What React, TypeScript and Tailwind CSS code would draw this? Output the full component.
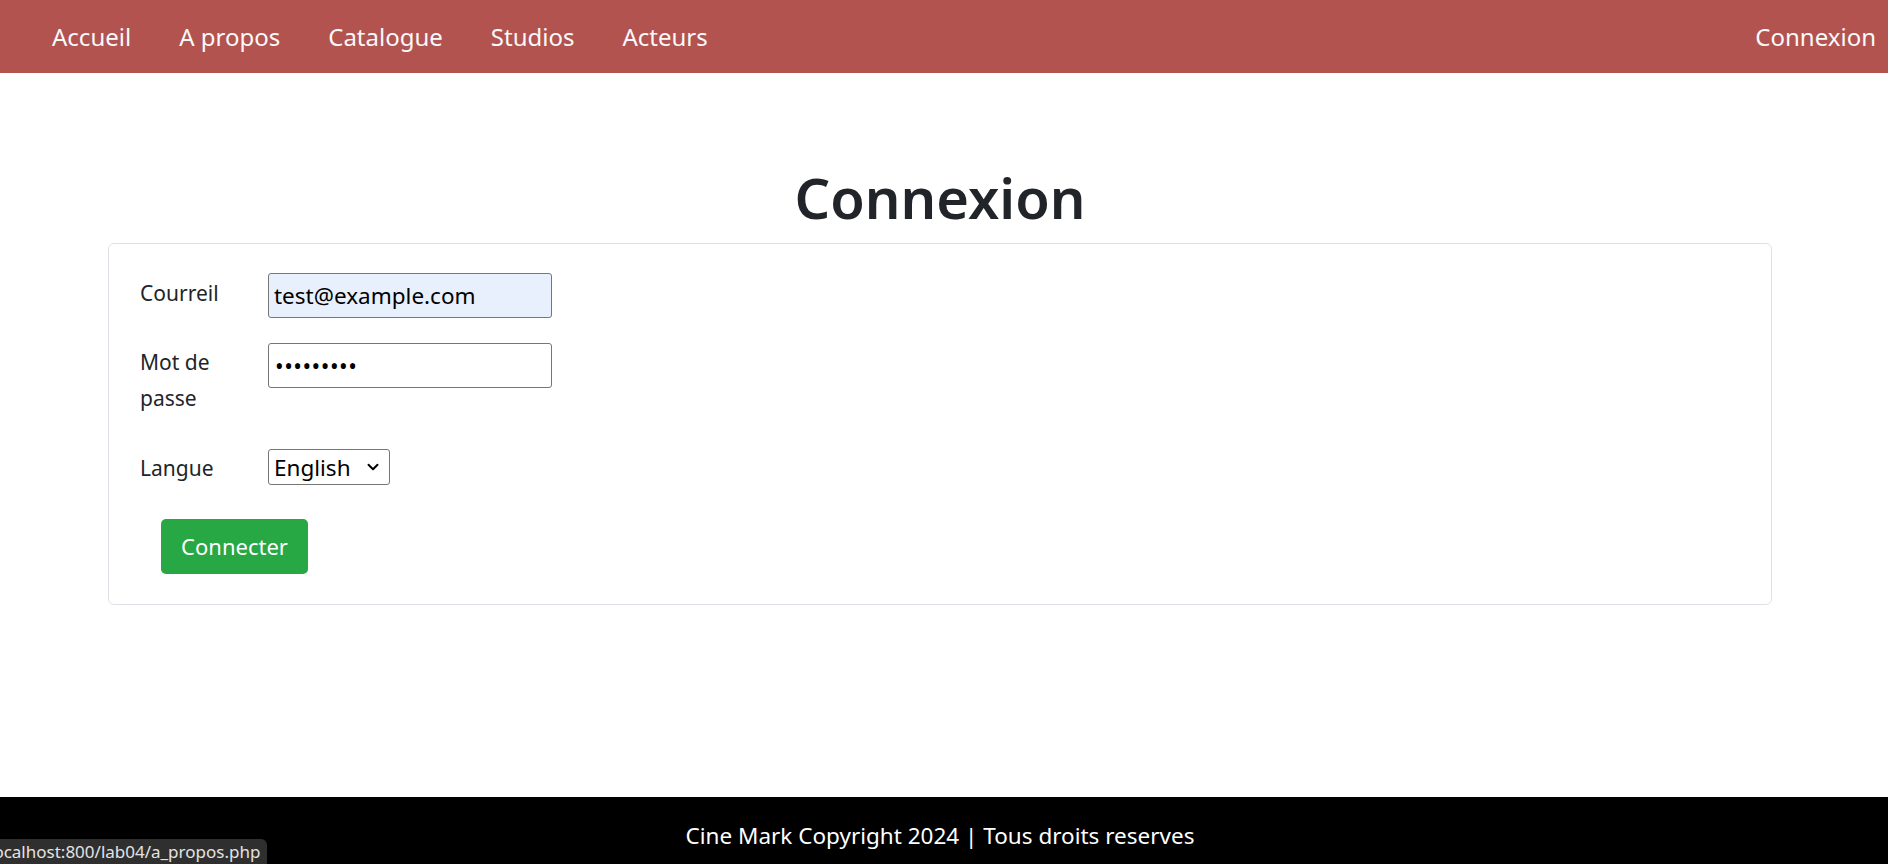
import { ChevronDown } from "lucide-react";

const navLinks = ["Accueil", "A propos", "Catalogue", "Studios", "Acteurs"];

const font = { fontFamily: '"Noto Sans", "Open Sans", sans-serif' };

export default function App() {
  return (
    <div className="relative h-screen overflow-hidden flex flex-col bg-white text-[#212529]" style={font}>
      {/* barre de navigation */}
      <nav className="h-[73px] shrink-0 bg-[#b3534f] flex items-center pl-[52px] pr-[12px] text-[24px] text-[#f8f9fa]">
        <ul className="flex items-center gap-[48px]">
          {navLinks.map((link) => (
            <li key={link}>
              <a href="#" className="leading-none">
                {link}
              </a>
            </li>
          ))}
        </ul>
        <a href="#" className="ml-auto leading-none">
          Connexion
        </a>
      </nav>

      <main className="flex-1 flex flex-col pl-[108px] pr-[116px]">
        <h1 className="mt-[91px] text-center text-[56px] font-semibold leading-[1.2] text-[#212529]">
          Connexion
        </h1>

        <form className="mt-[12px] border border-[#dee2e6] rounded-[6px] pt-[29px] pl-[31px] pb-[30px] text-[21px]">
          <div className="flex items-start">
            <label className="w-[128px] shrink-0 leading-[36px] mt-[2px]">Courreil</label>
            <input
              type="email"
              defaultValue="test@example.com"
              className="w-[284px] h-[45px] px-[5px] border border-[#767676] rounded-[3px] bg-[#e8f0fe] text-[22.5px] text-black outline-none"
            />
          </div>

          <div className="flex items-start mt-[25px]">
            <label className="w-[116px] mr-[12px] shrink-0 leading-[36px] mt-[1px]">Mot de passe</label>
            <input
              type="password"
              defaultValue="motdepass"
              className="w-[284px] h-[45px] px-[6px] border border-[#767676] rounded-[3px] bg-white text-[23px] tracking-[0.5px] text-black outline-none"
            />
          </div>

          <div className="flex items-start mt-[33px]">
            <label className="w-[128px] shrink-0 leading-[36px] mt-[1px]">Langue</label>
            <div className="relative">
              <select
                defaultValue="en"
                className="appearance-none w-[122px] h-[36px] pl-[5px] pr-[24px] pt-[1px] border border-[#767676] rounded-[3px] bg-white text-[22.5px] leading-[32px] text-black outline-none"
              >
                <option value="en">English</option>
                <option value="fr">Français</option>
              </select>
              <ChevronDown
                size={18}
                strokeWidth={2.6}
                className="pointer-events-none absolute right-[8px] top-[9px] text-black"
              />
            </div>
          </div>

          <button
            type="button"
            className="mt-[33px] ml-[21px] w-[147px] h-[55px] rounded-[5px] bg-[#28a745] text-white text-[22px]"
          >
            Connecter
          </button>
        </form>
      </main>

      <footer className="h-[67px] shrink-0 bg-black text-white text-center text-[22.5px] leading-[28px] pt-[25px] pr-[8px]">
        Cine Mark Copyright 2024 | Tous droits reserves
      </footer>

      {/* bulle d'état du navigateur */}
      <div className="absolute bottom-0 left-0 h-[25px] w-[267px] overflow-hidden rounded-tr-[6px] bg-[#2f2f2f] text-[#e3e3e3] text-[17px] leading-[25px] whitespace-nowrap">
        <span className="ml-[-11px]">localhost:800/lab04/a_propos.php</span>
      </div>
    </div>
  );
}
